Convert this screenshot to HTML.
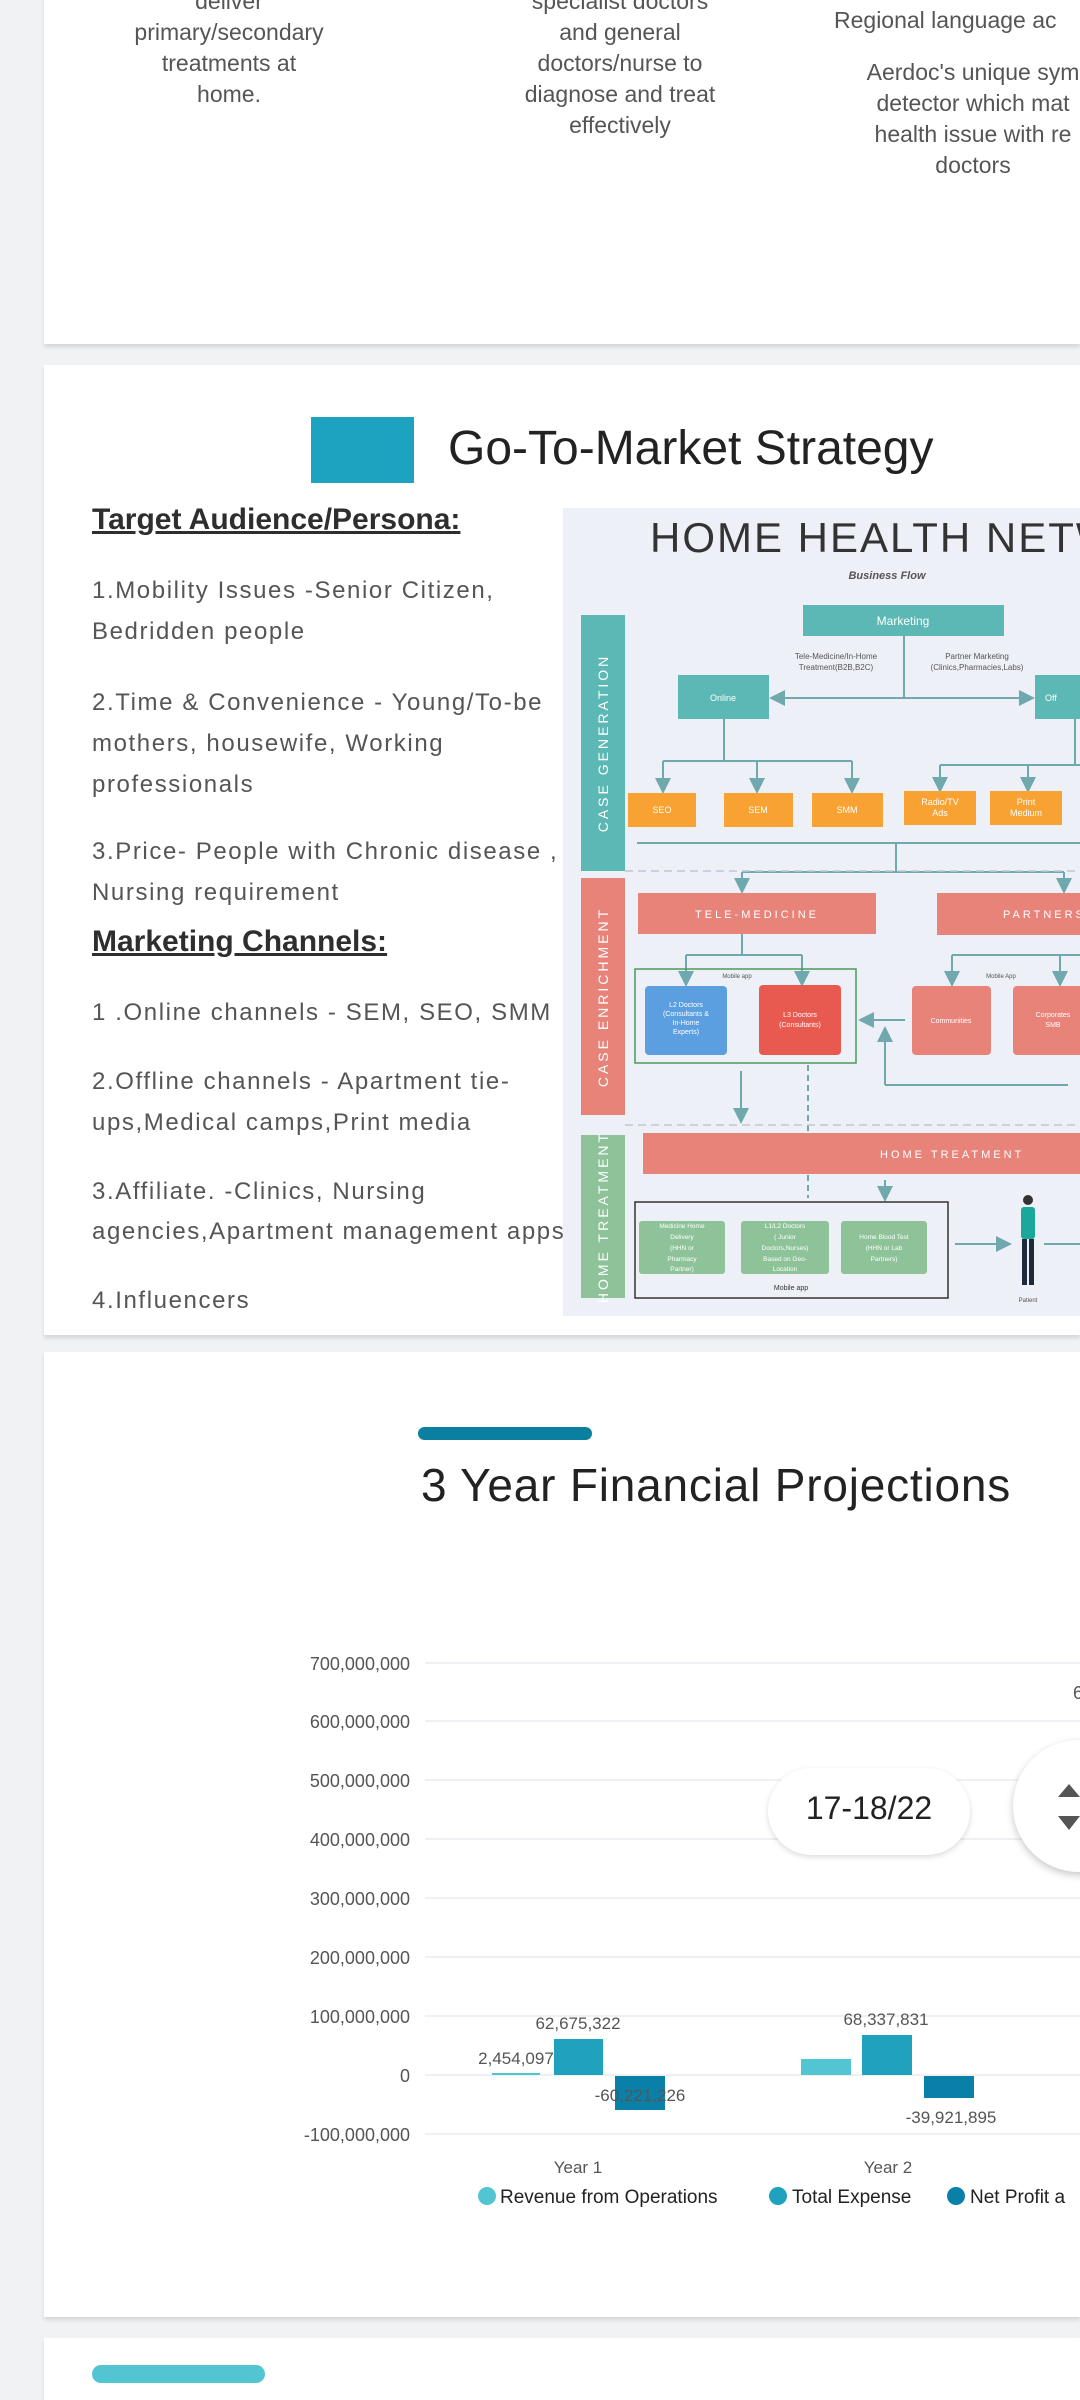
<!DOCTYPE html>
<html><head><meta charset="utf-8"><style>
html,body{margin:0;padding:0;}
body{width:1080px;height:2400px;overflow:hidden;position:relative;background:#f1f2f4;font-family:"Liberation Sans",sans-serif;}
.card{position:absolute;left:44px;width:1036px;background:#fff;box-shadow:0 3px 4px rgba(0,0,0,.12);}
.t{position:absolute;white-space:nowrap;}
.c1{color:#555;font-size:23px;line-height:31px;text-align:center;position:absolute;white-space:nowrap;transform:translateX(-50%);}
.li{position:absolute;left:92px;color:#555;font-size:24px;letter-spacing:1.6px;white-space:nowrap;}
.h{position:absolute;left:92px;color:#2e2e2e;font-size:30px;font-weight:bold;text-decoration:underline;white-space:nowrap;}
.clip{position:absolute;left:0;top:0;width:1080px;height:2400px;overflow:hidden;}
</style></head><body>
<div class="clip">
<div class="card" style="top:-10px;height:354px;"></div>
<div class="card" style="top:365px;height:970px;"></div>
<div class="card" style="top:1352px;height:965px;"></div>
<div class="card" style="top:2338px;height:62px;"></div>

<div class="c1" style="left:229px;top:-14px;">deliver<br>primary/secondary<br>treatments at<br>home.</div>
<div class="c1" style="left:620px;top:-14px;">specialist doctors<br>and general<br>doctors/nurse to<br>diagnose and treat<br>effectively</div>
<div class="t" style="left:834px;top:5px;color:#555;font-size:23px;line-height:31px;">Regional language ac</div>
<div class="t" style="left:850px;top:57px;width:246px;color:#555;font-size:23px;line-height:31px;text-align:center;">Aerdoc's unique sym<br>detector which mat<br>health issue with re<br>doctors</div>

<div style="position:absolute;left:311px;top:417px;width:103px;height:66px;background:#1da3bf;"></div>
<div class="t" style="left:448px;top:421px;font-size:48px;color:#222;">Go-To-Market Strategy</div>

<div class="h" style="top:503px;">Target Audience/Persona:</div>
<div class="li" style="top:577px;">1.Mobility Issues -Senior Citizen,</div>
<div class="li" style="top:618px;">Bedridden people</div>
<div class="li" style="top:689px;">2.Time &amp; Convenience - Young/To-be</div>
<div class="li" style="top:730px;">mothers, housewife, Working</div>
<div class="li" style="top:771px;">professionals</div>
<div class="li" style="top:838px;">3.Price- People with Chronic disease ,</div>
<div class="li" style="top:879px;">Nursing requirement</div>
<div class="h" style="top:925px;">Marketing Channels:</div>
<div class="li" style="top:999px;">1 .Online channels - SEM, SEO, SMM</div>
<div class="li" style="top:1068px;">2.Offline channels - Apartment tie-</div>
<div class="li" style="top:1109px;">ups,Medical camps,Print media</div>
<div class="li" style="top:1178px;">3.Affiliate. -Clinics, Nursing</div>
<div class="li" style="top:1218px;">agencies,Apartment management apps</div>
<div class="li" style="top:1287px;">4.Influencers</div>

<svg style="position:absolute;left:0;top:0" width="1080" height="2400" font-family="Liberation Sans, sans-serif">
<defs><marker id="a" markerWidth="8" markerHeight="8" refX="6" refY="4" orient="auto"><path d="M0,0 L8,4 L0,8 z" fill="#6fa8ad"/></marker></defs>
<rect x="563" y="508" width="517" height="808" fill="#eef0f7"/>
<text x="650" y="552" font-size="42" fill="#333" letter-spacing="2">HOME HEALTH NETWO</text>
<text x="887" y="579" font-size="11" font-style="italic" font-weight="bold" fill="#555" text-anchor="middle">Business Flow</text>
<rect x="581" y="615" width="44" height="256" fill="#5bb8b4"/>
<rect x="581" y="878" width="44" height="237" fill="#e8837a"/>
<rect x="581" y="1135" width="44" height="163" fill="#8ec39a"/>
<text transform="translate(608,743) rotate(-90)" font-size="14" fill="#fff" text-anchor="middle" letter-spacing="3">CASE GENERATION</text>
<text transform="translate(608,997) rotate(-90)" font-size="14" fill="#fff" text-anchor="middle" letter-spacing="3">CASE ENRICHMENT</text>
<text transform="translate(608,1217) rotate(-90)" font-size="14" fill="#fff" text-anchor="middle" letter-spacing="3">HOME TREATMENT</text>
<rect x="803" y="605" width="201" height="31" fill="#5bb8b4"/>
<text x="903" y="625" font-size="12" fill="#fff" text-anchor="middle">Marketing</text>
<text x="836" y="659" font-size="8" fill="#555" text-anchor="middle">Tele-Medicine/In-Home</text>
<text x="836" y="670" font-size="8" fill="#555" text-anchor="middle">Treatment(B2B,B2C)</text>
<text x="977" y="659" font-size="8" fill="#555" text-anchor="middle">Partner Marketing</text>
<text x="977" y="670" font-size="8" fill="#555" text-anchor="middle">(Clinics,Pharmacies,Labs)</text>
<rect x="678" y="675" width="91" height="44" fill="#5bb8b4"/>
<text x="723" y="701" font-size="9" fill="#fff" text-anchor="middle">Online</text>
<rect x="1035" y="675" width="45" height="44" fill="#5bb8b4"/>
<text x="1045" y="701" font-size="9" fill="#fff">Off</text>
<g stroke="#6fa8ad" stroke-width="2" fill="none">
<line x1="904" y1="636" x2="904" y2="698"/>
<line x1="904" y1="698" x2="773" y2="698" marker-end="url(#a)"/>
<line x1="904" y1="698" x2="1031" y2="698" marker-end="url(#a)"/>
<line x1="724" y1="719" x2="724" y2="761"/>
<line x1="663" y1="761" x2="852" y2="761"/>
<line x1="663" y1="761" x2="663" y2="790" marker-end="url(#a)"/>
<line x1="757" y1="761" x2="757" y2="790" marker-end="url(#a)"/>
<line x1="852" y1="761" x2="852" y2="790" marker-end="url(#a)"/>
<line x1="1075" y1="719" x2="1075" y2="765"/>
<line x1="940" y1="765" x2="1080" y2="765"/>
<line x1="940" y1="765" x2="940" y2="789" marker-end="url(#a)"/>
<line x1="1028" y1="765" x2="1028" y2="789" marker-end="url(#a)"/>
<line x1="637" y1="843" x2="1080" y2="843"/>
<line x1="896" y1="843" x2="896" y2="872"/>
<line x1="742" y1="872" x2="1064" y2="872"/>
<line x1="742" y1="872" x2="742" y2="890" marker-end="url(#a)"/>
<line x1="1064" y1="872" x2="1064" y2="890" marker-end="url(#a)"/>
<line x1="742" y1="934" x2="742" y2="955"/>
<line x1="686" y1="955" x2="802" y2="955"/>
<line x1="686" y1="955" x2="686" y2="983" marker-end="url(#a)"/>
<line x1="802" y1="955" x2="802" y2="983" marker-end="url(#a)"/>
<line x1="952" y1="955" x2="1080" y2="955"/>
<line x1="952" y1="955" x2="952" y2="983" marker-end="url(#a)"/>
<line x1="1060" y1="955" x2="1060" y2="983" marker-end="url(#a)"/>
<line x1="905" y1="1020" x2="862" y2="1020" marker-end="url(#a)"/>
<line x1="1068" y1="1085" x2="885" y2="1085"/>
<line x1="885" y1="1085" x2="885" y2="1030" marker-end="url(#a)"/>
<line x1="741" y1="1071" x2="741" y2="1120" marker-end="url(#a)"/>
<line x1="885" y1="1180" x2="885" y2="1198" marker-end="url(#a)"/>
<line x1="955" y1="1244" x2="1008" y2="1244" marker-end="url(#a)"/>
<line x1="1044" y1="1244" x2="1080" y2="1244"/>
</g>
<g stroke="#6fa8ad" stroke-width="2" stroke-dasharray="6,4"><line x1="808" y1="1065" x2="808" y2="1198"/></g>
<g stroke="#bfc6d4" stroke-width="1.5" stroke-dasharray="8,5">
<line x1="625" y1="871" x2="1080" y2="871"/>
<line x1="625" y1="1125" x2="1080" y2="1125"/>
</g>
<g fill="#f7a233"><rect x="628" y="793" width="68" height="34"/><rect x="724" y="793" width="69" height="34"/><rect x="812" y="793" width="71" height="34"/><rect x="904" y="791" width="72" height="34"/><rect x="990" y="791" width="72" height="34"/></g>
<g font-size="9" fill="#fff" text-anchor="middle">
<text x="662" y="813">SEO</text><text x="758" y="813">SEM</text><text x="847" y="813">SMM</text>
<text x="940" y="805">Radio/TV</text><text x="940" y="816">Ads</text>
<text x="1026" y="805">Print</text><text x="1026" y="816">Medium</text></g>
<rect x="638" y="893" width="238" height="41" fill="#e8837a"/>
<text x="757" y="918" font-size="11" fill="#fff" text-anchor="middle" letter-spacing="3">TELE-MEDICINE</text>
<rect x="937" y="893" width="143" height="42" fill="#e8837a"/>
<text x="1003" y="918" font-size="11" fill="#fff" letter-spacing="3">PARTNERS</text>
<rect x="635" y="969" width="221" height="94" fill="none" stroke="#4a9a5a" stroke-width="1.5"/>
<text x="737" y="978" font-size="6" fill="#555" text-anchor="middle">Mobile app</text>
<text x="1001" y="978" font-size="6" fill="#555" text-anchor="middle">Mobile App</text>
<rect x="645" y="986" width="82" height="69" rx="4" fill="#5b9fe0"/>
<rect x="759" y="985" width="82" height="70" rx="4" fill="#e85a50"/>
<rect x="912" y="986" width="79" height="69" rx="4" fill="#e8837a"/>
<rect x="1013" y="986" width="80" height="69" rx="4" fill="#e8837a"/>
<g font-size="7" fill="#fff" text-anchor="middle">
<text x="686" y="1007">L2 Doctors</text><text x="686" y="1016">(Consultants &amp;</text><text x="686" y="1025">In-Home</text><text x="686" y="1034">Experts)</text>
<text x="800" y="1017">L3 Doctors</text><text x="800" y="1027">(Consultants)</text>
<text x="951" y="1023">Communities</text>
<text x="1053" y="1017">Corporates</text><text x="1053" y="1027">SMB</text>
</g>
<rect x="643" y="1133" width="437" height="41" fill="#e8837a"/>
<text x="880" y="1158" font-size="11" fill="#fff" letter-spacing="3">HOME TREATMENT</text>
<rect x="635" y="1202" width="313" height="96" fill="none" stroke="#333" stroke-width="1.5"/>
<rect x="639" y="1221" width="86" height="53" rx="3" fill="#8ec39a"/>
<rect x="741" y="1221" width="88" height="53" rx="3" fill="#8ec39a"/>
<rect x="841" y="1221" width="86" height="53" rx="3" fill="#8ec39a"/>
<g font-size="6.5" fill="#fff" text-anchor="middle">
<text x="682" y="1228">Medicine Home</text><text x="682" y="1239">Delivery</text><text x="682" y="1250">(HHN or</text><text x="682" y="1261">Pharmacy</text><text x="682" y="1271">Partner)</text>
<text x="785" y="1228">L1/L2 Doctors</text><text x="785" y="1239">( Junior</text><text x="785" y="1250">Doctors,Nurses)</text><text x="785" y="1261">Based on Geo-</text><text x="785" y="1271">Location</text>
<text x="884" y="1239">Home Blood Test</text><text x="884" y="1250">(HHN or Lab</text><text x="884" y="1261">Partners)</text>
</g>
<text x="791" y="1290" font-size="7" fill="#333" text-anchor="middle">Mobile app</text>
<text x="1028" y="1302" font-size="6" fill="#555" text-anchor="middle">Patient</text>
<circle cx="1028" cy="1200" r="5" fill="#333"/>
<rect x="1021" y="1207" width="14" height="32" rx="3" fill="#1aa89a"/>
<rect x="1022" y="1239" width="5" height="46" fill="#1e2a3a"/><rect x="1029" y="1239" width="5" height="46" fill="#1e2a3a"/>

<rect x="418" y="1427" width="174" height="13" rx="6.5" fill="#0a7fa0"/>
<text x="421" y="1501" font-size="46" fill="#222" letter-spacing="0.8">3 Year Financial Projections</text>
<g stroke="#ececf0" stroke-width="1.5">
<line x1="425" y1="1663" x2="1080" y2="1663"/><line x1="425" y1="1721" x2="1080" y2="1721"/><line x1="425" y1="1780" x2="1080" y2="1780"/><line x1="425" y1="1839" x2="1080" y2="1839"/><line x1="425" y1="1898" x2="1080" y2="1898"/><line x1="425" y1="1957" x2="1080" y2="1957"/><line x1="425" y1="2016" x2="1080" y2="2016"/><line x1="425" y1="2075" x2="1080" y2="2075"/><line x1="425" y1="2134" x2="1080" y2="2134"/>
</g>
<g font-size="18" fill="#555" text-anchor="end">
<text x="410" y="1670">700,000,000</text><text x="410" y="1728">600,000,000</text><text x="410" y="1787">500,000,000</text><text x="410" y="1846">400,000,000</text><text x="410" y="1905">300,000,000</text><text x="410" y="1964">200,000,000</text><text x="410" y="2023">100,000,000</text><text x="410" y="2082">0</text><text x="410" y="2141">-100,000,000</text>
</g>
<text x="1073" y="1699" font-size="18" fill="#555">6</text>
<rect x="492" y="2073" width="48" height="2" fill="#52c5d3"/>
<rect x="554" y="2039" width="49" height="36" fill="#1ea2be"/>
<rect x="615" y="2076" width="50" height="34" fill="#0a80a8"/>
<rect x="801" y="2059" width="50" height="16" fill="#52c5d3"/>
<rect x="862" y="2035" width="50" height="40" fill="#1ea2be"/>
<rect x="924" y="2076" width="50" height="22" fill="#0a80a8"/>
<g font-size="17" fill="#555" text-anchor="middle">
<text x="578" y="2029">62,675,322</text><text x="516" y="2064">2,454,097</text><text x="640" y="2101">-60,221,226</text>
<text x="886" y="2025">68,337,831</text><text x="951" y="2123">-39,921,895</text>
<text x="578" y="2173">Year 1</text><text x="888" y="2173">Year 2</text>
</g>
<circle cx="487" cy="2196" r="9" fill="#52c5d3"/><circle cx="778" cy="2196" r="9" fill="#1ea2be"/><circle cx="956" cy="2196" r="9" fill="#0a80a8"/>
<g font-size="19" fill="#222"><text x="500" y="2203">Revenue from Operations</text><text x="792" y="2203">Total Expense</text><text x="970" y="2203">Net Profit a</text></g>
<rect x="92" y="2365" width="173" height="18" rx="9" fill="#52c5d3"/>
</svg>

<div style="position:absolute;left:768px;top:1768px;width:202px;height:87px;border-radius:44px;background:#fff;box-shadow:0 2px 6px rgba(0,0,0,.15);"></div>
<div class="t" style="left:768px;top:1790px;width:202px;text-align:center;font-size:32px;color:#222;">17-18/22</div>
<div style="position:absolute;left:1013px;top:1740px;width:132px;height:132px;border-radius:50%;background:#fff;box-shadow:0 3px 8px rgba(0,0,0,.22);"></div>
<svg style="position:absolute;left:1050px;top:1780px" width="30" height="54"><path d="M8,17 L30,17 L19,4 Z M8,36 L30,36 L19,50 Z" fill="#555"/></svg>
</div>
</body></html>
